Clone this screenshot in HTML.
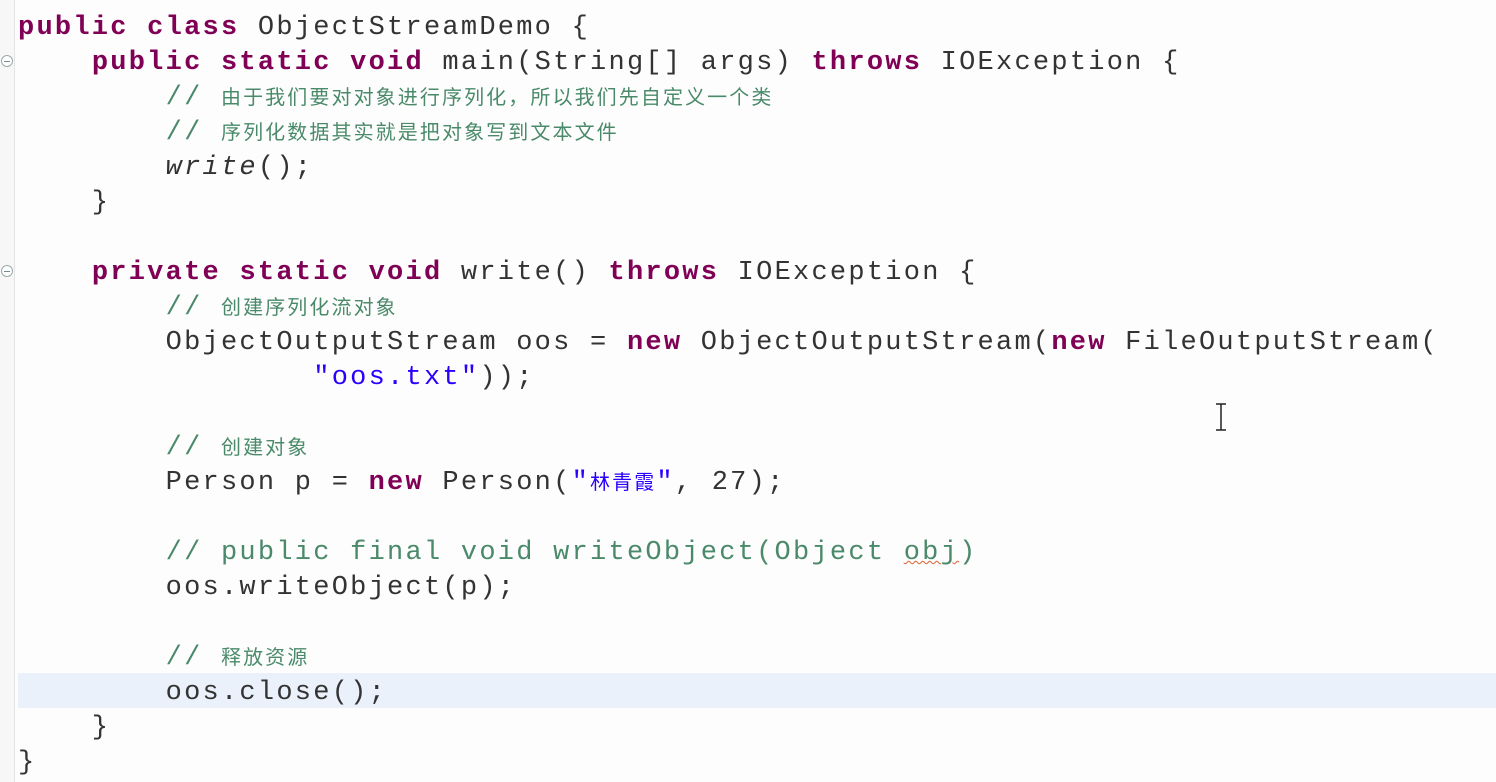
<!DOCTYPE html>
<html><head><meta charset="utf-8"><style>
html,body{margin:0;padding:0;}
body{width:1496px;height:782px;background:#fdfdfd;position:relative;overflow:hidden;}
.gut{position:absolute;left:0;top:0;width:14px;height:782px;background:#f7f7f7;border-right:1px solid #e4e4e4;}
.hl{position:absolute;left:18px;right:0;top:673px;height:35px;background:#eaf1fa;}
.code{position:absolute;left:18px;top:11px;margin:0;font-family:"Liberation Mono",monospace;font-size:27px;letter-spacing:2.25px;color:#333;}
.code div{height:35px;line-height:35px;white-space:pre;}
.k{color:#7f0055;font-weight:bold;}
.c{color:#4a8a6a;}
.cj{font-family:"Noto Sans CJK SC",sans-serif;font-size:20px;letter-spacing:2.1px;line-height:1;}
.s{color:#2a00ff;}
.u{text-decoration:underline wavy #e06030;text-decoration-thickness:1px;}
.fold{position:absolute;left:1px;width:10px;height:10px;border:1px solid #9aa;border-radius:50%;background:#fff;}
.fold:after{content:"";position:absolute;left:2px;right:2px;top:4.5px;height:1px;background:#789;}
.cur{position:absolute;left:1215px;top:403px;width:12px;height:28px;}
</style></head><body>
<div class="gut"></div>
<div class="hl"></div>
<div class="fold" style="top:55px"></div>
<div class="fold" style="top:265px"></div>
<div class="code"><div><span class="k">public</span> <span class="k">class</span> ObjectStreamDemo {</div><div>    <span class="k">public</span> <span class="k">static</span> <span class="k">void</span> main(String[] args) <span class="k">throws</span> IOException {</div><div>        <span class="c">// <span class="cj">由于我们要对对象进行序列化，所以我们先自定义一个类</span></span></div><div>        <span class="c">// <span class="cj">序列化数据其实就是把对象写到文本文件</span></span></div><div>        <i>write</i>();</div><div>    }</div><div> </div><div>    <span class="k">private</span> <span class="k">static</span> <span class="k">void</span> write() <span class="k">throws</span> IOException {</div><div>        <span class="c">// <span class="cj">创建序列化流对象</span></span></div><div>        ObjectOutputStream oos = <span class="k">new</span> ObjectOutputStream(<span class="k">new</span> FileOutputStream(</div><div>                <span class="s">"oos.txt"</span>));</div><div> </div><div>        <span class="c">// <span class="cj">创建对象</span></span></div><div>        Person p = <span class="k">new</span> Person(<span class="s">"<span class="cj">林青霞</span>"</span>, 27);</div><div> </div><div>        <span class="c">// public final void writeObject(Object <span class="u">obj</span>)</span></div><div>        oos.writeObject(p);</div><div> </div><div>        <span class="c">// <span class="cj">释放资源</span></span></div><div>        oos.close();</div><div>    }</div><div>}</div></div>
<svg class="cur" viewBox="0 0 12 28"><path d="M1 1h10M1 27h10M6 1v26" stroke="#222" stroke-width="1.5" fill="none"/></svg>
</body></html>
